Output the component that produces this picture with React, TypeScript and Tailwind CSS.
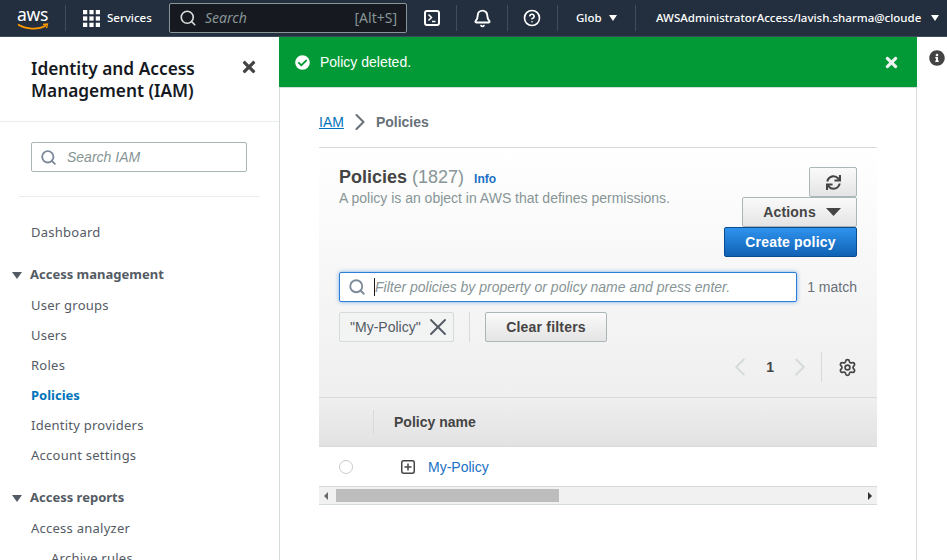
import { Bell, ChevronLeft, ChevronRight, CircleHelp, Search, Settings, X } from 'lucide-react'
import { FaCheckCircle, FaInfoCircle, FaSync, FaTimes } from 'react-icons/fa'

const NOTO = "font-['Noto_Sans',sans-serif]"

function Caret({ className }: { className: string }) {
  return (
    <svg viewBox="0 0 12 8" preserveAspectRatio="none" className={className} fill="currentColor">
      <path d="M0 0h12L6 8z" />
    </svg>
  )
}

function NavDivider() {
  return <div className="h-[26px] w-px bg-[#414d5c]" />
}

function TopBar() {
  return (
    <header className={`${NOTO} flex h-[37px] shrink-0 items-center border-b border-[#3d4a5c] bg-[#232f3e] text-[11.5px] text-white`}>
      {/* aws logo */}
      <div className="relative ml-[17px] h-[27px] w-[32px] shrink-0">
        <span className="absolute -top-[3px] left-0 text-[17.5px] leading-[24px] tracking-[-0.3px]">aws</span>
        <svg viewBox="0 0 32 8" className="absolute bottom-[1px] left-0 h-[8px] w-[32px]" fill="none">
          <path d="M1 1.5C9 6.5 21 7 29 2.5" stroke="#f90" strokeWidth="1.7" />
          <path d="M26 1.5l4.5-.5-1 4.2" stroke="#f90" strokeWidth="1.3" />
        </svg>
      </div>
      <div className="ml-[16px]"><NavDivider /></div>
      <svg viewBox="0 0 16 16" className="ml-[17px] h-[17px] w-[17px]" fill="white">
        <rect x="0" y="0" width="4" height="4" /><rect x="6" y="0" width="4" height="4" /><rect x="12" y="0" width="4" height="4" />
        <rect x="0" y="6" width="4" height="4" /><rect x="6" y="6" width="4" height="4" /><rect x="12" y="6" width="4" height="4" />
        <rect x="0" y="12" width="4" height="4" /><rect x="6" y="12" width="4" height="4" /><rect x="12" y="12" width="4" height="4" />
      </svg>
      <span className="ml-[7px] w-[45px] shrink-0 font-medium">Services</span>
      <div className="ml-[17px] flex h-[30px] w-[238px] shrink-0 items-center rounded-[2px] border border-[#879596] bg-[#16191f] pl-[9px] pr-[9px] text-[#879596]">
        <Search size={18} strokeWidth={2.2} className="text-[#d5dbdb]" />
        <span className="ml-[8px] text-sm italic">Search</span>
        <span className="ml-auto text-sm">[Alt+S]</span>
      </div>
      <svg viewBox="0 0 16 16" className="ml-[17px] h-[16px] w-[16px] shrink-0" fill="none" stroke="white">
        <rect x="1" y="1" width="14" height="14" rx="2" strokeWidth="2" />
        <path d="M4.5 4.5L7.5 7.5L4.5 10.5M8 11.5h3.5" strokeWidth="1.5" />
      </svg>
      <div className="ml-[16px]"><NavDivider /></div>
      <Bell size={19} strokeWidth={2.4} className="ml-[16px] shrink-0" />
      <div className="ml-[15px]"><NavDivider /></div>
      <CircleHelp size={18} strokeWidth={2.2} className="ml-[15px] shrink-0" />
      <div className="ml-[16px]"><NavDivider /></div>
      <span className="ml-[18px] w-[25px] shrink-0 font-medium">Glob</span>
      <Caret className="ml-[8px] h-[6px] w-[8px] shrink-0" />
      <div className="ml-[18px]"><NavDivider /></div>
      <span className="ml-[20px] whitespace-nowrap font-medium">AWSAdministratorAccess/lavish.sharma@cloude</span>
      <Caret className="ml-[10px] h-[6px] w-[8px] shrink-0" />
    </header>
  )
}

const ACCESS_MANAGEMENT = ['User groups', 'Users', 'Roles', 'Policies', 'Identity providers', 'Account settings']

function NavLink({ label, active }: { label: string; active?: boolean }) {
  return (
    <div className={`flex h-[30px] items-center pl-[31px] text-[13px] tracking-[0.25px] ${active ? 'font-bold tracking-normal text-[#0073bb]' : 'text-[#545b64]'}`}>
      {label}
    </div>
  )
}

function NavSection({ label }: { label: string }) {
  return (
    <div className="mb-px flex h-[30px] items-center pl-[12px] text-[13px] font-bold text-[#545b64]">
      <Caret className="mr-[8px] h-[7px] w-[10px]" />
      {label}
    </div>
  )
}

function Sidebar() {
  return (
    <aside className={`${NOTO} w-[280px] shrink-0 border-r border-[#d5dbdb] bg-white`}>
      <div className="flex h-[85px] items-start justify-between border-b border-[#eaeded] pl-[31px] pr-[21px] pt-[21px]">
        <h2 className="w-[200px] text-[17.3px] font-semibold leading-[22px] text-[#16191f]">
          Identity and Access Management (IAM)
        </h2>
        <FaTimes size={18} className="text-[#444]" />
      </div>
      <div className="mx-[19px] border-b border-[#eaeded] px-[12px] pb-[24px] pt-[20px]">
        <div className="flex h-[30px] w-[216px] items-center rounded-[2px] border border-[#aab7b8] pl-[8px]">
          <Search size={17} strokeWidth={2.6} className="text-[#7d8998]" />
          <span className="ml-[10px] font-['Liberation_Sans',sans-serif] text-sm italic text-[#879596]">Search IAM</span>
        </div>
      </div>
      <nav className="pt-[21px]">
        <NavLink label="Dashboard" />
        <div className="mt-[12px]"><NavSection label="Access management" /></div>
        {ACCESS_MANAGEMENT.map((item) => (
          <NavLink key={item} label={item} active={item === 'Policies'} />
        ))}
        <div className="mt-[12px]"><NavSection label="Access reports" /></div>
        <NavLink label="Access analyzer" />
        <div className="pl-[20px]"><NavLink label="Archive rules" /></div>
      </nav>
    </aside>
  )
}

function GrayButton({ className, children }: { className: string; children: React.ReactNode }) {
  return (
    <div className={`flex h-[30px] items-center justify-center rounded-[2px] border border-[#aab7b8] bg-gradient-to-b from-[#fafafa] to-[#e4e4e4] text-sm font-bold tracking-[0.2px] text-[#444] ${className}`}>
      {children}
    </div>
  )
}

function PoliciesTable() {
  return (
    <section className="mx-[39px] mt-[15px] w-[558px] border-t border-[#d5dbdb]">
      <div className="relative bg-gradient-to-b from-white to-[#efefef] px-[20px] pb-[15px] pt-[19px]">
        <div className="flex items-start justify-between">
          <div>
            <div className="flex items-baseline text-[18px] leading-[21px]">
              <span className="font-bold text-[#444]">Policies</span>
              <span className="ml-[5px] text-[#879596]">(1827)</span>
              <span className="ml-[10px] text-xs font-bold text-[#1870c4]">Info</span>
            </div>
            <p className="mt-[2px] text-sm leading-[16px] text-[#879596]">
              A policy is an object in AWS that defines permissions.
            </p>
          </div>
          <div className="flex flex-col items-end">
            <GrayButton className="w-[48px]"><FaSync size={15} /></GrayButton>
            <GrayButton className="w-[115px] gap-[10px] pl-[5px]">
              Actions
              <Caret className="h-[8px] w-[15px]" />
            </GrayButton>
            <div className="flex h-[30px] w-[133px] items-center justify-center rounded-[2px] border border-[#0a4a8f] bg-gradient-to-b from-[#2f93ee] to-[#0f62b5] text-sm font-bold tracking-[0.2px] text-white">
              Create policy
            </div>
          </div>
        </div>

        <div className="mt-[15px] flex items-center justify-between">
          <div className="flex h-[30px] w-[458px] items-center rounded-[2px] border border-[#2b7fd8] bg-white pl-[8px] shadow-[0_0_4px_rgba(43,127,216,0.6)]">
            <Search size={18} strokeWidth={2.4} className="text-[#7d8998]" />
            <span className="ml-[8px] h-[18px] w-px bg-[#16191f]" />
            <span className="text-sm italic text-[#879596]">Filter policies by property or policy name and press enter.</span>
          </div>
          <span className="text-sm text-[#687078]">1 match</span>
        </div>

        <div className="mt-[10px] flex items-center">
          <div className="flex h-[30px] w-[115px] items-center rounded-[2px] border border-[#d5dbdb] bg-[#f2f3f3] pl-[10px] text-sm text-[#545b64]">
            "My-Policy"
            <X size={28} strokeWidth={1.6} className="ml-[3px] text-[#545b64]" />
          </div>
          <div className="mx-[15px] h-[30px] w-px bg-[#d5dbdb]" />
          <GrayButton className="w-[122px]">Clear filters</GrayButton>
        </div>

        <div className="mt-[10px] flex h-[30px] items-center justify-end">
          <ChevronLeft size={30} strokeWidth={1.6} className="text-[#d5dbdb]" />
          <span className="mx-[11px] text-sm font-bold text-[#444]">1</span>
          <ChevronRight size={30} strokeWidth={1.6} className="text-[#d5dbdb]" />
          <div className="ml-[6px] mr-[16px] h-[30px] w-px bg-[#d5dbdb]" />
          <Settings size={19} strokeWidth={2.2} className="text-[#444]" />
        </div>
      </div>

      <div className="flex h-[50px] items-center border-y border-[#d5dbdb] bg-gradient-to-b from-[#efefef] to-[#e2e2e2]">
        <div className="ml-[54px] h-[24px] w-px bg-[#d5dbdb]" />
        <span className="ml-[20px] text-sm font-bold text-[#444]">Policy name</span>
      </div>

      <div className="flex h-[39px] items-center bg-white">
        <span className="ml-[20px] h-[14px] w-[14px] rounded-full border border-[#c6cccc] bg-white" />
        <svg viewBox="0 0 14 14" className="ml-[48px] h-[14px] w-[14px]" fill="none" stroke="#444">
          <rect x="0.75" y="0.75" width="12.5" height="12.5" rx="2" strokeWidth="1.5" />
          <path d="M7 3.5v7M3.5 7h7" strokeWidth="1.5" />
        </svg>
        <span className="ml-[13px] text-sm text-[#1870c4]">My-Policy</span>
      </div>

      <div className="flex h-[19px] items-center border-y border-[#d5dbdb] bg-[#f1f1f1]">
        <svg viewBox="0 0 4 8" className="ml-[5px] h-[8px] w-[4px] text-[#6b6b6b]" fill="currentColor"><path d="M4 0v8L0 4z" /></svg>
        <div className="ml-[8px] h-[13px] w-[223px] bg-[#bdbdbd]" />
        <svg viewBox="0 0 4 8" className="ml-auto mr-[5px] h-[8px] w-[4px] text-[#333]" fill="currentColor"><path d="M0 0v8l4-4z" /></svg>
      </div>
    </section>
  )
}

export default function App() {
  return (
    <div className="flex h-[560px] w-[947px] flex-col overflow-hidden bg-white font-['Liberation_Sans',sans-serif]">
      <TopBar />
      <div className="flex min-h-0 flex-1">
        <Sidebar />
        <main className="w-[637px] shrink-0 border-r border-[#d5dbdb] bg-white">
          <div className="-mx-px flex h-[51px] items-center border-b border-[#d5dbdb] bg-[#029a36] pl-[16px] pr-[17px] text-white">
            <FaCheckCircle size={15} />
            <span className="ml-[10px] text-sm">Policy deleted.</span>
            <FaTimes size={17} className="ml-auto text-[#f1f3f3]" />
          </div>
          <div className="flex h-[44px] items-center pl-[39px] pt-[24px] text-sm">
            <span className="text-[#0073bb] underline">IAM</span>
            <ChevronRight size={28} strokeWidth={1.8} className="mx-[2px] text-[#687078]" />
            <span className="font-bold text-[#687078]">Policies</span>
          </div>
          <PoliciesTable />
        </main>
        <div className="flex flex-1 justify-end pr-[2px] pt-[13px]">
          <FaInfoCircle size={16} className="text-[#444]" />
        </div>
      </div>
    </div>
  )
}
